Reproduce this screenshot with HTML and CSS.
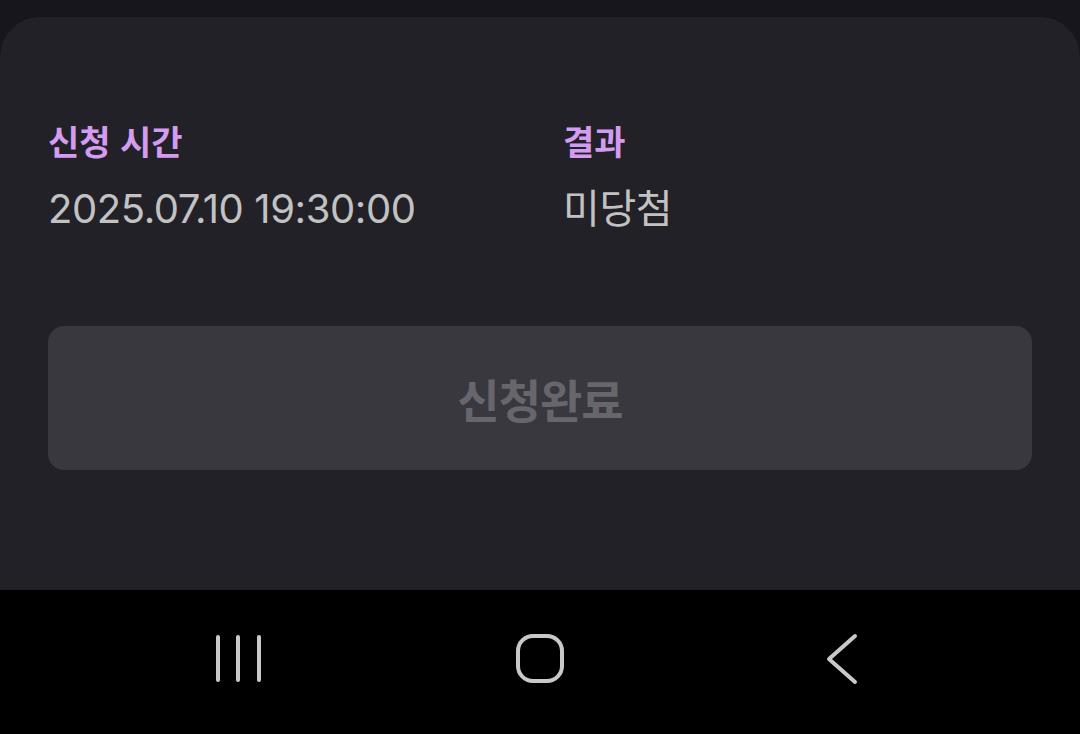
FILE: index.html
```html
<!DOCTYPE html>
<html lang="ko">
<head>
    <meta charset="UTF-8">
    <meta name="viewport" content="width=device-width, initial-scale=1.0">
    <title>신청 내역</title>
    <link rel="stylesheet" href="styles.css">
</head>
<body>
    <div class="sheet">
        <div class="info">
            <div class="field">
                <div class="label">신청 시간</div>
                <div class="value">2025.07.10 19:30:00</div>
            </div>
            <div class="field">
                <div class="label">결과</div>
                <div class="value">미당첨</div>
            </div>
        </div>
        <button class="done" disabled>신청완료</button>
    </div>

    <div class="nav">
        <svg class="nav-icon" width="60" height="60" viewBox="0 0 60 60">
            <line x1="10" y1="8" x2="10" y2="51" />
            <line x1="30" y1="8" x2="30" y2="51" />
            <line x1="51" y1="8" x2="51" y2="51" />
        </svg>
        <svg class="nav-icon" width="60" height="60" viewBox="0 0 60 60">
            <rect x="8" y="7" width="44" height="45" rx="15" />
        </svg>
        <svg class="nav-icon" width="60" height="60" viewBox="0 0 60 60">
            <polyline points="43,7 17,30 43,53" />
        </svg>
    </div>
</body>
</html>
```

FILE: styles.css
```css
* {
    box-sizing: border-box;
}
body {
    margin: 0;
    background: #17161c;
    font-family: "Inter", "Noto Sans CJK KR", sans-serif;
}
.sheet {
    margin-top: 17px;
    height: 573px;
    background: #222127;
    border-radius: 40px 40px 0 0;
    padding: 102px 48px 0;
}
.info {
    display: grid;
    grid-template-columns: 515px 1fr;
}
.label {
    font-family: "Noto Sans CJK KR", sans-serif;
    font-size: 34px;
    font-weight: 700;
    color: #d49cf0;
    line-height: 1.3;
}
.value {
    margin-top: 18px;
    font-size: 40px;
    color: #c2c2c3;
    line-height: 56px;
    letter-spacing: -0.4px;
}
.done {
    display: block;
    width: 100%;
    height: 144px;
    margin-top: 89px;
    border: none;
    border-radius: 16px;
    background: #39383f;
    color: #67666c;
    font-family: "Noto Sans CJK KR", sans-serif;
    font-size: 46px;
    font-weight: 700;
    letter-spacing: -1px;
}
.nav {
    height: 144px;
    background: #000;
    display: flex;
    justify-content: center;
    align-items: center;
    gap: 242px;
    padding-bottom: 6px;
}
.nav-icon {
    fill: none;
    stroke: #c9c9c9;
    stroke-width: 4;
    stroke-linecap: round;
    stroke-linejoin: round;
}
```
